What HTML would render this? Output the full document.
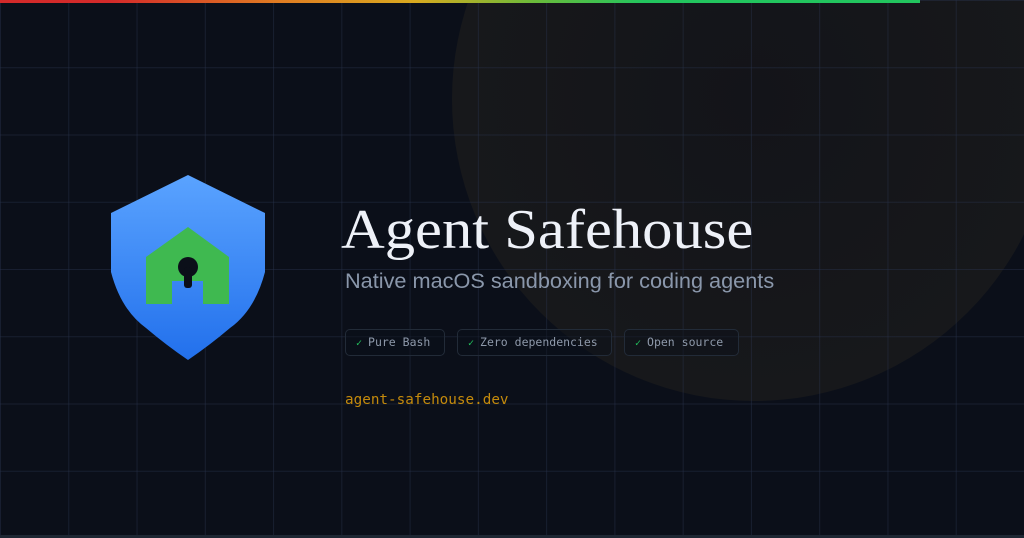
<!DOCTYPE html>
<html><head><meta charset="utf-8"><style>
html,body{margin:0;padding:0}
body{width:1024px;height:538px;overflow:hidden;position:relative;background:#0b0f19;font-family:"Liberation Sans",sans-serif}
.glow{position:absolute;left:452px;top:-203px;width:604px;height:604px;border-radius:50%;background:radial-gradient(circle,#131419 0%,#17181b 70%,#16171a 100%)}
.grid{position:absolute;inset:0;background-image:linear-gradient(to right,rgba(40,50,75,.45) 1px,transparent 1px),linear-gradient(to bottom,rgba(40,50,75,.45) 1px,transparent 1px);background-size:68.27px 67.25px;background-position:0 0}
.bar{position:absolute;left:0;top:0;width:920px;height:3px;background:linear-gradient(to right,#d42a2a 0%,#d42a2a 12%,#e07b22 30%,#d9a91f 45%,#6bbb3a 58%,#22c55e 70%,#22c55e 100%)}
.bottom{position:absolute;left:0;bottom:0;width:1024px;height:3px;background:#1e2733}
h1{position:absolute;left:341px;top:196px;margin:0;font-family:"Liberation Serif",serif;font-weight:normal;font-size:56px;color:#eef1f8;line-height:68px;transform:scaleX(1.082);transform-origin:0 0;white-space:nowrap}
.sub{position:absolute;left:345px;top:268px;font-size:21.7px;color:#8a97ab;white-space:nowrap}
.pill{position:absolute;top:329px;height:27px;border:1px solid #222b38;border-radius:5px;box-sizing:border-box;font-family:"DejaVu Sans Mono","Liberation Mono",monospace;font-size:11.5px;color:#8e99aa;line-height:25px;padding-left:10px;background:rgba(11,15,25,.4);white-space:nowrap}
.pill b{color:#22c55e;font-weight:normal;margin-right:6px;font-size:10px}
.url{position:absolute;left:345px;top:392px;font-family:"DejaVu Sans Mono","Liberation Mono",monospace;font-size:14.3px;color:#c48a0c}
</style></head><body>
<div class="glow"></div>
<div class="grid"></div>
<div class="bar"></div>
<div class="bottom"></div>
<svg style="position:absolute;left:0;top:0" width="400" height="400">
<defs><linearGradient id="g" x1="0" y1="0" x2="0" y2="1"><stop offset="0" stop-color="#5aa3ff"/><stop offset="1" stop-color="#2270ec"/></linearGradient></defs>
<path d="M188 175 L265 213 L265 272 Q255 310 230 328 Q210 345 188 360 Q166 345 146 328 Q121 310 111 272 L111 213 Z" fill="url(#g)"/>
<path d="M188 227 L229 257 L229 304 L203 304 L203 281 L172 281 L172 304 L146 304 L146 257 Z" fill="#3fb950"/>
<circle cx="188" cy="267" r="10" fill="#0b0f19"/>
<rect x="184" y="267" width="8" height="21" rx="3" fill="#0b0f19"/>
</svg>
<h1>Agent Safehouse</h1>
<div class="sub">Native macOS sandboxing for coding agents</div>
<div class="pill" style="left:345px;width:100px"><b>✓</b>Pure Bash</div>
<div class="pill" style="left:457px;width:155px"><b>✓</b>Zero dependencies</div>
<div class="pill" style="left:624px;width:115px"><b>✓</b>Open source</div>
<div class="url">agent-safehouse.dev</div>
</body></html>
